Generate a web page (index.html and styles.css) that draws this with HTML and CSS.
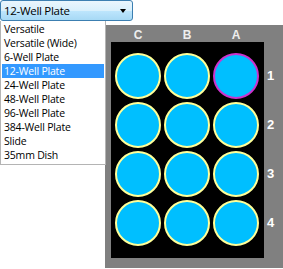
FILE: index.html
```html
<!DOCTYPE html>
<html lang="en">
<head>
  <meta charset="UTF-8" />
  <title>Plate Selector</title>
  <link rel="stylesheet" href="styles.css">
</head>
<body>
  <div class="picker">
    <div class="combo">
      <span class="combo-text">12-Well Plate</span>
      <span class="combo-arrow"></span>
    </div>
    <ul class="combo-list">
      <li>Versatile</li>
      <li>Versatile (Wide)</li>
      <li>6-Well Plate</li>
      <li class="selected">12-Well Plate</li>
      <li>24-Well Plate</li>
      <li>48-Well Plate</li>
      <li>96-Well Plate</li>
      <li>384-Well Plate</li>
      <li>Slide</li>
      <li>35mm Dish</li>
    </ul>
  </div>

  <div class="panel">
    <div class="plate-col">
      <div class="col-labels">
        <span>C</span>
        <span>B</span>
        <span>A</span>
      </div>
      <div class="plate">
        <div class="well"></div>
        <div class="well"></div>
        <div class="well active"></div>
        <div class="well"></div>
        <div class="well"></div>
        <div class="well"></div>
        <div class="well"></div>
        <div class="well"></div>
        <div class="well"></div>
        <div class="well"></div>
        <div class="well"></div>
        <div class="well"></div>
      </div>
    </div>
    <div class="row-labels">
      <span>1</span>
      <span>2</span>
      <span>3</span>
      <span>4</span>
    </div>
  </div>
</body>
</html>
```

FILE: styles.css
```css
body {
  margin: 0;
  padding: 0;
  background-color: white;
  font-family: "Open Sans", "Noto Sans", sans-serif;
  overflow: hidden;
}

.picker {
  position: relative;
  width: 133px;
  height: 21px;
}

.combo {
  display: flex;
  align-items: center;
  justify-content: space-between;
  box-sizing: border-box;
  height: 21px;
  padding: 0 6px 0 3px;
  border: 1px solid #3c7fb1;
  border-radius: 3px;
  background: linear-gradient(#eaf6fd 0%, #d9f0fc 50%, #bee6fd 51%, #a7d9f5 100%);
  font-size: 11.5px;
  letter-spacing: -0.3px;
  color: black;
}

.combo-arrow {
  width: 0;
  height: 0;
  border-left: 3px solid transparent;
  border-right: 3px solid transparent;
  border-top: 4px solid black;
}

.combo-list {
  position: absolute;
  top: 21px;
  left: 0;
  width: 106px;
  box-sizing: border-box;
  margin: 0;
  padding: 1px 0 2px 0;
  list-style: none;
  background-color: white;
  border: 1px solid #b4b4b4;
  border-top: none;
  font-size: 10.5px;
  letter-spacing: -0.2px;
  line-height: 14px;
  z-index: 2;
}

.combo-list li {
  padding-left: 2px;
  margin: 0 1px;
  height: 14px;
  white-space: nowrap;
}

.combo-list li.selected {
  background-color: #3399ff;
  color: white;
}

.panel {
  display: flex;
  margin: 4px 0 0 105px;
  height: 243px;
  padding-left: 6px;
  background-color: #808080;
  font-family: "Liberation Sans", Arial, sans-serif;
  font-weight: bold;
}

.col-labels {
  display: grid;
  grid-template-columns: repeat(3, 46px);
  column-gap: 3px;
  padding: 4px 5px 0 4px;
  height: 13px;
  font-size: 12px;
  line-height: 13px;
  color: #eeeeee;
  text-align: center;
}

.plate {
  display: grid;
  grid-template-columns: repeat(3, 46px);
  grid-auto-rows: 46px;
  gap: 3px;
  padding: 11px 5px 12px 4px;
  background-color: black;
}

.well {
  box-sizing: border-box;
  border: 2px solid #ffff99;
  border-radius: 50%;
  background-color: #00bfff;
}

.well.active {
  border-color: #cc33cc;
}

.row-labels {
  display: flex;
  flex-direction: column;
  gap: 3px;
  padding: 28px 0 0 3px;
  font-size: 13px;
  color: white;
}

.row-labels span {
  height: 46px;
  line-height: 46px;
}
```
